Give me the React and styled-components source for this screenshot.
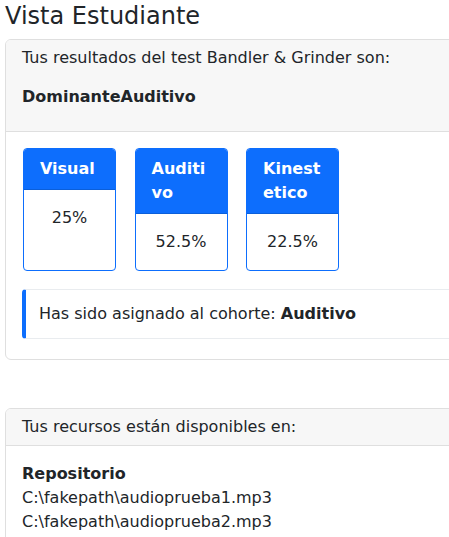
import React from "react";
import styled, { createGlobalStyle } from "styled-components";

const Global = createGlobalStyle`
  html, body {
    margin: 0;
    padding: 0;
    overflow: hidden;
    background: #fff;
  }
  body {
    font-family: "DejaVu Sans", sans-serif;
    font-size: 16px;
    line-height: 24px;
    color: #212529;
  }
  * { box-sizing: border-box; }
`;

const Page = styled.div`
  padding: 2px 0 0 5px;
  width: 760px;
`;

const Title = styled.h4`
  margin: 0 0 8px;
  font-size: 24px;
  line-height: 28.8px;
  font-weight: 400;
`;

const Card = styled.section`
  display: flex;
  flex-direction: column;
  border: 1px solid #dfdfdf;
  border-radius: 6px;
  background: #fff;
  margin-top: ${(p) => p.$gap || 0}px;
  overflow-wrap: break-word;
`;

const CardHeader = styled.div`
  background: #f7f7f7;
  border-bottom: 1px solid #dfdfdf;
  padding: 6px 16px;
  border-radius: 5px 5px 0 0;
`;

const HeaderLine = styled.p`
  margin: 0 0 ${(p) => p.$mb || 0}px;
  font-weight: ${(p) => (p.$bold ? 700 : 400)};
`;

const CardBody = styled.div`
  padding: 16px;
`;

const Scores = styled.div`
  display: flex;
  gap: 18.5px;
  align-items: stretch;
  padding-left: 1px;
`;

const ScoreCard = styled.div`
  flex: 0 0 93px;
  width: 93px;
  display: flex;
  flex-direction: column;
  border: 1px solid #0d6efd;
  border-radius: 4px;
  overflow-wrap: break-word;
  min-width: 0;
`;

const ScoreHeader = styled.div`
  background: #0d6efd;
  color: #fff;
  font-weight: 700;
  padding: 8px 16px;
  border-bottom: 1px solid #0b5fd9;
  border-radius: 3px 3px 0 0;
`;

const ScoreValue = styled.div`
  flex: 1;
  padding: 16px;
  text-align: center;
`;

const Callout = styled.div`
  margin: 18px 0 4px;
  padding: 12px 13px;
  border: 1px solid #e9ecef;
  border-left: 4px solid #0d6efd;
  border-radius: 4px;
`;

const Line = styled.div`
  font-weight: ${(p) => (p.$bold ? 700 : 400)};
`;

const scores = [
  { label: "Visual", value: "25%" },
  { label: "Auditivo", value: "52.5%" },
  { label: "Kinestetico", value: "22.5%" },
];

export default function App() {
  return (
    <>
      <Global />
      <Page>
        <Title>Vista Estudiante</Title>
        <Card>
          <CardHeader>
            <HeaderLine $mb={15}>
              Tus resultados del test Bandler &amp; Grinder son:
            </HeaderLine>
            <HeaderLine $bold $mb={16}>
              DominanteAuditivo
            </HeaderLine>
          </CardHeader>
          <CardBody>
            <Scores>
              {scores.map((s) => (
                <ScoreCard key={s.label}>
                  <ScoreHeader>{s.label}</ScoreHeader>
                  <ScoreValue>{s.value}</ScoreValue>
                </ScoreCard>
              ))}
            </Scores>
            <Callout>
              Has sido asignado al cohorte: <b>Auditivo</b>
            </Callout>
          </CardBody>
        </Card>
        <Card $gap={48}>
          <CardHeader>Tus recursos están disponibles en:</CardHeader>
          <CardBody>
            <Line $bold>Repositorio</Line>
            <Line>C:\fakepath\audioprueba1.mp3</Line>
            <Line>C:\fakepath\audioprueba2.mp3</Line>
          </CardBody>
        </Card>
      </Page>
    </>
  );
}
